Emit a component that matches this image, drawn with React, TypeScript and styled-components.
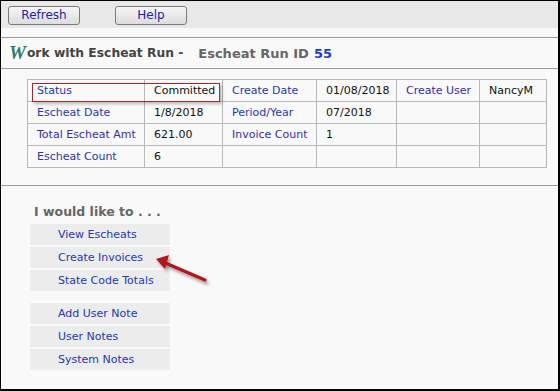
import styled, { createGlobalStyle } from 'styled-components';

const GlobalStyle = createGlobalStyle`
  html, body {
    margin: 0;
    padding: 0;
    background: #ffffff;
  }
  * {
    box-sizing: border-box;
  }
`;

const Frame = styled.div({
  position: 'relative',
  width: 560,
  height: 391,
  border: '1px solid #000',
  borderRightWidth: 2,
  borderBottomWidth: 2,
  background: '#f9f9f9',
  fontFamily: '"DejaVu Sans", Verdana, sans-serif',
  overflow: 'hidden',
});

const Toolbar = styled.div({
  display: 'flex',
  alignItems: 'center',
  gap: 35,
  height: 27,
  paddingLeft: 7,
  paddingTop: 1,
  background: '#e8e8e8',
});

const ToolButton = styled.button({
  width: 72,
  height: 19,
  padding: 0,
  border: '1px solid #7a7a7a',
  borderRadius: 3,
  background: 'linear-gradient(#f6f6f6, #dcdcdc)',
  color: '#1e1ea8',
  fontFamily: '"DejaVu Sans", Verdana, sans-serif',
  fontSize: 12,
  lineHeight: '17px',
});

const Rule = styled.div<{ $top?: number }>((props) => ({
  height: 1,
  marginTop: props.$top ?? 0,
  background: '#9a9a9a',
}));

const TitleRow = styled.div({
  display: 'flex',
  alignItems: 'center',
  height: 30,
  paddingLeft: 8,
  fontWeight: 700,
  fontSize: 12.3,
  color: '#444',
});

const ScriptW = styled.span({
  fontFamily: '"Liberation Serif", "DejaVu Serif", serif',
  fontStyle: 'italic',
  fontWeight: 700,
  fontSize: 19,
  lineHeight: '20px',
  color: '#2b7a78',
  marginRight: 1,
});

const RunId = styled.span({
  marginLeft: 15,
  fontSize: 13,
  color: '#666',
});

const RunNumber = styled.span({
  color: '#1f3fc0',
  fontSize: 13,
  marginLeft: 5,
});

const TableWrap = styled.div({
  padding: '10px 0 17px 26px',
});

const InfoTable = styled.table({
  borderCollapse: 'collapse',
  width: 519,
  tableLayout: 'fixed',
  fontSize: 11,
});

const Cell = styled.td<{ $label?: boolean; $visited?: boolean }>((props) => ({
  position: 'relative',
  height: 22,
  padding: '0 0 0 9px',
  border: '1px solid #b8b8b8',
  whiteSpace: 'nowrap',
  color: props.$label ? (props.$visited ? '#3a2aa8' : '#2438b0') : '#111',
}));

const Highlight = styled.div({
  position: 'absolute',
  left: 4,
  top: 3,
  width: 188,
  height: 19,
  border: '1px solid #a8262a',
  boxShadow: '2px 2px 3px rgba(0,0,0,0.25)',
  pointerEvents: 'none',
});

const Actions = styled.div({
  position: 'relative',
  padding: '18px 0 0 29px',
});

const ActionsTitle = styled.div({
  fontWeight: 700,
  fontSize: 12.5,
  color: '#666',
  paddingLeft: 4,
  height: 20,
});

const ActionGroup = styled.div<{ $gap?: number }>((props) => ({
  display: 'flex',
  flexDirection: 'column',
  gap: 2,
  marginTop: props.$gap ?? 0,
}));

const ActionItem = styled.div({
  width: 140,
  height: 21,
  paddingLeft: 28,
  background: '#ececec',
  color: '#2438b0',
  fontSize: 11,
  lineHeight: '21px',
});

const Arrow = styled.svg({
  position: 'absolute',
  left: 150,
  top: 65,
  overflow: 'visible',
});

const rows: [string, string, string, string, string, string][] = [
  ['Status', 'Committed', 'Create Date', '01/08/2018', 'Create User', 'NancyM'],
  ['Escheat Date', '1/8/2018', 'Period/Year', '07/2018', '', ''],
  ['Total Escheat Amt', '621.00', 'Invoice Count', '1', '', ''],
  ['Escheat Count', '6', '', '', '', ''],
];

const visited = ['Total Escheat Amt', 'Invoice Count', 'Create User'];
const widths = [117, 78, 94, 80, 83, 67];

export default function App() {
  return (
    <>
      <GlobalStyle />
      <Frame>
        <Toolbar>
          <ToolButton>Refresh</ToolButton>
          <ToolButton>Help</ToolButton>
        </Toolbar>
        <Rule $top={9} />
        <TitleRow>
          <ScriptW>W</ScriptW>ork with Escheat Run -
          <RunId>Escheat Run ID</RunId>
          <RunNumber>55</RunNumber>
        </TitleRow>
        <Rule />
        <TableWrap>
          <InfoTable>
            <colgroup>
              {widths.map((w, i) => (
                <col key={i} style={{ width: w }} />
              ))}
            </colgroup>
            <tbody>
              {rows.map((row, r) => (
                <tr key={r}>
                  {row.map((text, c) => (
                    <Cell key={c} $label={c % 2 === 0} $visited={visited.includes(text)}>
                      {r === 0 && c === 0 && <Highlight />}
                      {text}
                    </Cell>
                  ))}
                </tr>
              ))}
            </tbody>
          </InfoTable>
        </TableWrap>
        <Rule />
        <Actions>
          <ActionsTitle>I would like to . . .</ActionsTitle>
          <ActionGroup>
            <ActionItem>View Escheats</ActionItem>
            <ActionItem>Create Invoices</ActionItem>
            <ActionItem>State Code Totals</ActionItem>
          </ActionGroup>
          <ActionGroup $gap={12}>
            <ActionItem>Add User Note</ActionItem>
            <ActionItem>User Notes</ActionItem>
            <ActionItem>System Notes</ActionItem>
          </ActionGroup>
          <Arrow width="60" height="40" viewBox="0 0 60 40">
            <defs>
              <filter id="arrowShadow" x="-30%" y="-30%" width="160%" height="180%">
                <feDropShadow dx="2" dy="3" stdDeviation="1.5" floodColor="#000" floodOpacity="0.35" />
              </filter>
            </defs>
            <g filter="url(#arrowShadow)">
              <line x1="54" y1="29" x2="12" y2="11" stroke="#b5121b" strokeWidth="3.5" strokeLinecap="round" />
              <polygon points="5,8 18,4 14,18" fill="#b5121b" />
            </g>
          </Arrow>
        </Actions>
      </Frame>
    </>
  );
}
